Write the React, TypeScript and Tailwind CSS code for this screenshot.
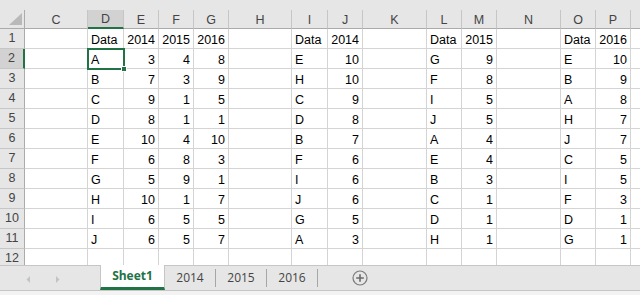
import React from "react";

const COLS = ["C", "D", "E", "F", "G", "H", "I", "J", "K", "L", "M", "N", "O", "P", "Q"];

// column contents, row 1 to row 11
const DATA: Record<string, (string | number)[]> = {
  D: ["Data", "A", "B", "C", "D", "E", "F", "G", "H", "I", "J"],
  E: [2014, 3, 7, 9, 8, 10, 6, 5, 10, 6, 6],
  F: [2015, 4, 3, 1, 1, 4, 8, 9, 1, 5, 5],
  G: [2016, 8, 9, 5, 1, 10, 3, 1, 7, 5, 7],
  I: ["Data", "E", "H", "C", "D", "B", "F", "I", "J", "G", "A"],
  J: [2014, 10, 10, 9, 8, 7, 6, 6, 6, 5, 3],
  L: ["Data", "G", "F", "I", "J", "A", "E", "B", "C", "D", "H"],
  M: [2015, 9, 8, 5, 5, 4, 4, 3, 1, 1, 1],
  O: ["Data", "E", "B", "A", "H", "J", "C", "I", "F", "D", "G"],
  P: [2016, 10, 9, 8, 7, 7, 5, 5, 3, 1, 1],
};

const ROWS = Array.from({ length: 12 }, (_, i) => i + 1);

function ColHeader({ letter }: { letter: string }) {
  const active = letter === "D";
  return (
    <div
      className={`flex items-center justify-center border-r border-[#c6c6c6] text-[12.5px] pt-[2px] text-[#444] ${
        active ? "bg-[#d2d2d2] border-b-2 border-b-[#217346]" : "bg-[#e6e6e6] border-b border-b-[#ababab]"
      }`}
    >
      {letter === "Q" ? null : letter}
    </div>
  );
}

function RowHeader({ n }: { n: number }) {
  const active = n === 2;
  return (
    <div
      className={`flex items-center justify-center border-b border-[#c6c6c6] text-[12.5px] text-[#444] ${
        active ? "bg-[#d2d2d2] border-r-2 border-r-[#217346]" : "bg-[#e6e6e6] border-r border-r-[#ababab]"
      }`}
    >
      {n}
    </div>
  );
}

function Cell({ value }: { value?: string | number }) {
  const numeric = typeof value === "number";
  return (
    <div
      className={`border-r border-b border-[#d4d4d4] bg-white px-[3px] pt-[3px] text-[12.5px] leading-[16px] text-black whitespace-nowrap overflow-hidden ${
        numeric ? "text-right" : "text-left"
      }`}
    >
      {value}
    </div>
  );
}

function TabBar() {
  return (
    <div className="flex h-[25px] bg-[#e6e6e6] font-['Open_Sans',sans-serif] text-[12px]">
      <div className="flex w-[100px] items-center border-t border-[#c6c6c6]">
        <svg width="100" height="24" viewBox="0 0 100 24">
          <polygon points="30,10 30,17 26.5,13.5" fill="#c3c3c3" />
          <polygon points="56,10 56,17 59.5,13.5" fill="#c3c3c3" />
        </svg>
      </div>
      <div className="flex w-[65px] items-center justify-center border-x border-[#c6c6c6] border-b-[3px] border-b-[#217346] bg-white font-bold text-[#217346]">
        Sheet1
      </div>
      {["2014", "2015", "2016"].map((t) => (
        <div key={t} className="flex w-[51px] items-center border-t border-[#c6c6c6]">
          <span className="flex-1 text-center text-[#444]">{t}</span>
          <span className="h-[18px] w-px bg-[#a6a6a6]" />
        </div>
      ))}
      <div className="flex flex-1 items-center border-t border-[#c6c6c6] pl-[34px]">
        <svg width="16" height="16" viewBox="0 0 16 16">
          <circle cx="8" cy="8" r="7" fill="none" stroke="#7a7a7a" strokeWidth="1.2" />
          <path d="M8 4.2v7.6M4.2 8h7.6" stroke="#6a6a6a" strokeWidth="1.6" />
        </svg>
      </div>
    </div>
  );
}

export default function App() {
  return (
    <div className="flex h-[295px] w-[640px] flex-col overflow-hidden bg-white font-['Liberation_Sans',Arial,sans-serif]">
      <div className="h-[10px] bg-[#e6e6e6]" />
      <div className="relative h-[255px] overflow-hidden">
        <div className="grid grid-cols-[25px_63px_36px_35px_35px_35px_63px_36px_35px_64px_35px_35px_64px_35px_35px_64px] grid-rows-[19px_repeat(11,20px)_20px]">
          <div className="relative border-r border-b border-[#ababab] bg-[#e6e6e6]">
            <svg className="absolute right-[2px] bottom-[3px]" width="13" height="12" viewBox="0 0 13 12">
              <polygon points="13,0 13,12 0,12" fill="#b9b9b9" />
            </svg>
          </div>
          {COLS.map((c) => (
            <ColHeader key={c} letter={c} />
          ))}
          {ROWS.map((r) => (
            <React.Fragment key={r}>
              <RowHeader n={r} />
              {COLS.map((c) => (
                <Cell key={c} value={r <= 11 ? DATA[c]?.[r - 1] : undefined} />
              ))}
            </React.Fragment>
          ))}
        </div>
        {/* active cell D2 */}
        <div className="absolute left-[87px] top-[38px] h-[22px] w-[38px] border-2 border-[#217346]" />
        <div className="absolute left-[121px] top-[56px] h-[6px] w-[6px] border border-white bg-[#217346]" />
      </div>
      <TabBar />
      <div className="flex-1 border-t border-[#c6c6c6] bg-[#f3f3f3]" />
    </div>
  );
}
